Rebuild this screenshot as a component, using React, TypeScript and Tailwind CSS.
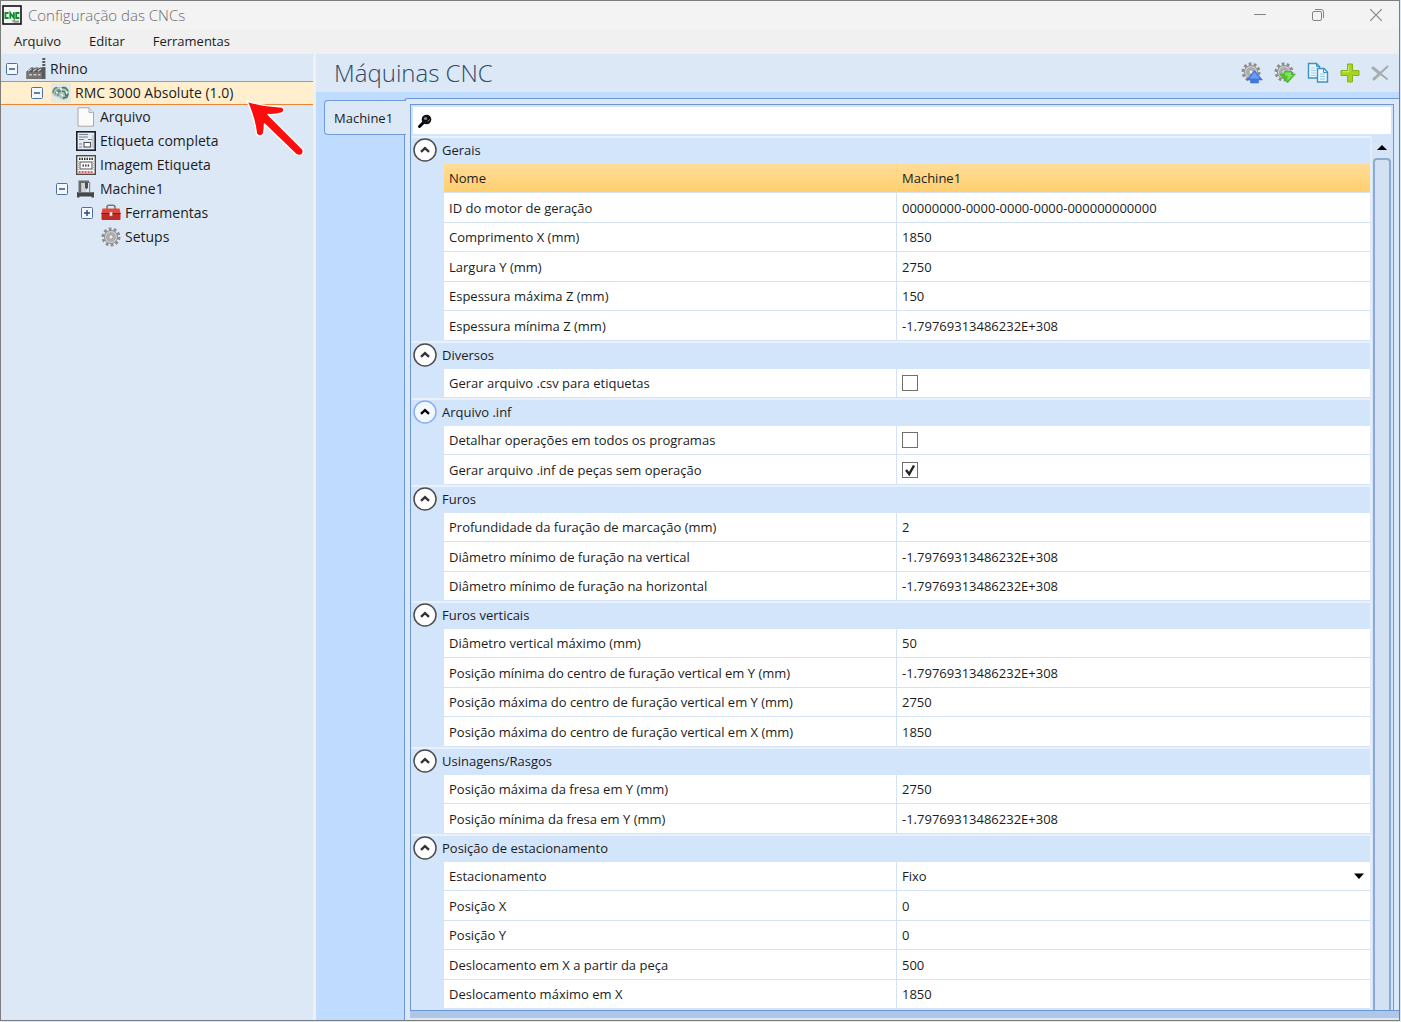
import React, { useState } from "react";

type Field = { label: string; value?: string; checked?: boolean; options?: string[]; selected?: boolean };
type Group = { title: string; hot?: boolean; fields: Field[] };

const MIN = "-1.79769313486232E+308";

const groups: Group[] = [
  {
    title: "Gerais",
    fields: [
      { label: "Nome", value: "Machine1", selected: true },
      { label: "ID do motor de geração", value: "00000000-0000-0000-0000-000000000000" },
      { label: "Comprimento X (mm)", value: "1850" },
      { label: "Largura Y (mm)", value: "2750" },
      { label: "Espessura máxima Z (mm)", value: "150" },
      { label: "Espessura mínima Z (mm)", value: MIN },
    ],
  },
  { title: "Diversos", fields: [{ label: "Gerar arquivo .csv para etiquetas", checked: false }] },
  {
    title: "Arquivo .inf",
    hot: true,
    fields: [
      { label: "Detalhar operações em todos os programas", checked: false },
      { label: "Gerar arquivo .inf de peças sem operação", checked: true },
    ],
  },
  {
    title: "Furos",
    fields: [
      { label: "Profundidade da furação de marcação (mm)", value: "2" },
      { label: "Diâmetro mínimo de furação na vertical", value: MIN },
      { label: "Diâmetro mínimo de furação na horizontal", value: MIN },
    ],
  },
  {
    title: "Furos verticais",
    fields: [
      { label: "Diâmetro vertical máximo (mm)", value: "50" },
      { label: "Posição mínima do centro de furação vertical em Y (mm)", value: MIN },
      { label: "Posição máxima do centro de furação vertical em Y (mm)", value: "2750" },
      { label: "Posição máxima do centro de furação vertical em X (mm)", value: "1850" },
    ],
  },
  {
    title: "Usinagens/Rasgos",
    fields: [
      { label: "Posição máxima da fresa em Y (mm)", value: "2750" },
      { label: "Posição mínima da fresa em Y (mm)", value: MIN },
    ],
  },
  {
    title: "Posição de estacionamento",
    fields: [
      { label: "Estacionamento", options: ["Fixo"] },
      { label: "Posição X", value: "0" },
      { label: "Posição Y", value: "0" },
      { label: "Deslocamento em X a partir da peça", value: "500" },
      { label: "Deslocamento máximo em X", value: "1850" },
    ],
  },
];

function CncLogo() {
  return (
    <svg className="h-5 w-5 shrink-0" viewBox="0 0 20 20" aria-hidden="true">
      <rect x="1" y="1" width="18" height="18" fill="#f6f6f6" stroke="#111" strokeWidth="1.6" />
      <g fill="none" stroke="#0b8f2c" strokeWidth="1.8">
        <path d="M6.6 8H3.4v5h3.2M8.3 13.8V8l3.6 5V7.2M17.4 8h-3.2v5h3.2" />
      </g>
      <path d="M9 15.5h2l1-1 1 1h4v2.2h-5L11 17z" fill="#999" />
    </svg>
  );
}

function FactoryIcon() {
  return (
    <svg className="h-6 w-5" viewBox="0 0 20 24" aria-hidden="true">
      <path d="M.5 14.500L5 10.500h3l-1 1.500 2.500-1.500h3L11.500 12l2.500-1.500h5.500V22H.5z" fill="#5a5a5a" />
      <path d="M.5 15h15.500v7H.5z" fill="#747474" />
      <path d="M2 14.300l3.500-2.600M7 14.300l3.500-2.600M12 14.300l3-2.300" stroke="#cfcfcf" strokeWidth="1.200" />
      <path d="M3 17h3v1.500H3zM7.500 17h3v1.500h-3zM12 17h2.500v1.500H12z" fill="#c8c8c8" />
      <path d="M17.800 1v10" stroke="#5b5b5b" strokeWidth="3" strokeDasharray="2 1" />
    </svg>
  );
}

function MachinePartsIcon() {
  return (
    <svg className="h-5 w-5" viewBox="0 0 20 20" aria-hidden="true">
      <rect width="20" height="20" fill="#e6e9e2" />
      <path d="M1 8l4-4h6l3-1 4 4v5l-2 4-4 1-5-3-4-1-2-3z" fill="#a9c4b8" />
      <path d="M2 10q0-5 4-5.500M4 11q2-4 5-4M7 13q-1-4 3-5" fill="none" stroke="#5f8676" strokeWidth="1.300" />
      <path d="M11 4.500l4 .5 2 3M11 8l3 1 1 4M12 15l4-1 1-4" fill="none" stroke="#3f6f5c" strokeWidth="1.300" />
      <path d="M9 5l2 2M5 9l2 1M10 11l2 2M15 8l1 3" stroke="#eef4f0" strokeWidth="1.400" />
    </svg>
  );
}

function PageIcon() {
  return (
    <svg className="h-5 w-5" viewBox="0 0 20 20" aria-hidden="true">
      <path d="M2 .8h11l4.500 4.700v13.700H2z" fill="#fbfbfb" stroke="#a8a8a8" />
      <path d="M13 .8v4.700h4.500" fill="#e2e2e2" stroke="#b0b0b0" />
    </svg>
  );
}

function LabelIcon() {
  return (
    <svg className="h-5 w-5" viewBox="0 0 20 20" aria-hidden="true">
      <rect x=".8" y=".8" width="18.4" height="18.4" fill="#e4ecf7" stroke="#1c1f26" strokeWidth="1.6" />
      <path d="M3 3.500h9M3 6h9M3 8.500h5M12 8.500h4M3 13h3M3 16h3" stroke="#7b7f86" strokeWidth="1.200" />
      <rect x="8" y="11.500" width="6.500" height="4.500" fill="#fff" stroke="#555" strokeWidth="1.100" />
      <path d="M17 4v13" stroke="#a3a8b0" />
    </svg>
  );
}

function LabelImageIcon() {
  return (
    <svg className="h-5 w-5" viewBox="0 0 20 20" aria-hidden="true">
      <rect x=".7" y=".7" width="18.6" height="18.6" fill="#fafafa" stroke="#4a4a4a" strokeWidth="1.4" />
      <path d="M3 3.800h14" stroke="#333" strokeWidth="2.200" strokeDasharray="1.500 1" />
      <rect x="4" y="7" width="12" height="7" fill="none" stroke="#555" />
      <path d="M6.500 10.500h7.500" stroke="#333" strokeWidth="2" strokeDasharray="1.400 1.200" />
      <path d="M2.600 6v9M17.400 6v9" stroke="#aaa" strokeDasharray="1 1" />
      <path d="M2.600 17h15" stroke="#e02020" strokeWidth="1.400" strokeDasharray="2 1" />
    </svg>
  );
}

function RouterIcon() {
  return (
    <svg className="h-5 w-5" viewBox="0 0 20 20" aria-hidden="true">
      <path d="M2.500 1.500H13V4H5.500v9h-3z" fill="#6a6a6a" />
      <path d="M5.500 4H10v9H5.500z" fill="#cdd3da" />
      <path d="M9 3.500h3v5L10.500 10.500 9 8.500z" fill="#4d4d4d" />
      <path d="M13 3h1.200v10H13z" fill="#8a8a8a" />
      <path d="M1 13h17v5.500h-2.500V17.500h-12v1H1z" fill="#474747" />
      <path d="M1.500 13.500h16" stroke="#777" />
    </svg>
  );
}

function ToolboxIcon() {
  return (
    <svg className="h-5 w-5" viewBox="0 0 20 20" aria-hidden="true">
      <path d="M6 6V4q0-1.800 2-1.800h4q2 0 2 1.800v2" fill="none" stroke="#777" strokeWidth="1.600" />
      <path d="M1.500 5.500h17l1.200 5.500H.3z" fill="#e2483f" />
      <path d="M.5 10.500h19v5.500q0 1-1 1h-17q-1 0-1-1z" fill="#c22a26" />
      <path d="M.5 10.500h19" stroke="#8f1614" />
      <rect x="8.700" y="9" width="2.600" height="4" fill="#eee" stroke="#888" strokeWidth=".6" />
    </svg>
  );
}

function Gear() {
  return (
    <g>
      <circle cx="10" cy="10" r="7.900" fill="none" stroke="#8c8c8c" strokeWidth="3.200" strokeDasharray="2.700 2.264" />
      <circle cx="10" cy="10" r="6.600" fill="#c9c9c9" stroke="#949494" />
      <circle cx="10" cy="10" r="4.300" fill="#b4b4b4" stroke="#a0a0a0" strokeWidth=".8" />
      <circle cx="10" cy="10" r="2.200" fill="#e6edf6" stroke="#8d8d8d" strokeWidth=".8" />
    </g>
  );
}

function GearIcon() {
  return (
    <svg className="h-5 w-5" viewBox="0 0 20 20" aria-hidden="true">
      <Gear />
    </svg>
  );
}

function GearUpIcon() {
  return (
    <svg className="h-[22px] w-[22px]" viewBox="0 0 22 22" aria-hidden="true">
      <Gear />
      <path d="M13.500 8.500L21.500 18h-4v3h-8v-3h-4z" fill="#4377e2" stroke="#3f6fd0" strokeWidth=".6" />
      <path d="M13.500 10l5 6.500h-10z" fill="#6d9af3" />
    </svg>
  );
}

function GearDownIcon() {
  return (
    <svg className="h-[22px] w-[22px]" viewBox="0 0 22 22" aria-hidden="true">
      <Gear />
      <path d="M10 9.500h8V12h3.500L13.500 21 5.500 12H10z" fill="#4fc52c" stroke="#43ad24" strokeWidth=".6" />
      <path d="M11 10.500h6v2.500h2l-5.500 5.500v-5H11z" fill="#83e062" />
    </svg>
  );
}

function CopyIcon() {
  return (
    <svg className="h-[22px] w-[22px]" viewBox="0 0 22 22" aria-hidden="true">
      <path d="M1.500 1.500h8l3 3V16h-11z" fill="#eaf5fc" stroke="#3a93c2" strokeWidth="1.400" />
      <path d="M9.500 1.500v3h3" fill="none" stroke="#3a93c2" />
      <path d="M4 6h4M4 8.500h5M4 11h5M4 13.500h5" stroke="#a5cfe8" />
      <path d="M10.500 6.500H17l3.500 3.500v10h-10z" fill="#eef7fd" stroke="#3a93c2" strokeWidth="1.400" />
      <path d="M16.500 6.500v4h4" fill="none" stroke="#3a93c2" />
      <path d="M13 12h5M13 14.500h5M13 17h5" stroke="#8fc3e3" />
    </svg>
  );
}

function PlusIcon() {
  return (
    <svg className="h-5 w-5" viewBox="0 0 20 20" aria-hidden="true">
      <path d="M7.500 1h5v6.500H19v5h-6.500V19h-5v-6.500H1v-5h6.500z" fill="#a4d421" stroke="#86b31a" />
      <path d="M8.800 2.500v6.300H2.500" fill="none" stroke="#d0ef6d" />
    </svg>
  );
}

function RemoveIcon() {
  return (
    <svg className="h-[18px] w-[18px]" viewBox="0 0 18 18" aria-hidden="true">
      <path d="M2 4L16 15M16.500 2.500L3 15" stroke="#a6a9ae" strokeWidth="2" strokeLinecap="round" />
      <path d="M2 4l6 4.700M3 15l5-4.600" stroke="#a9acb1" strokeWidth="3" strokeLinecap="round" />
    </svg>
  );
}

function PointerArrow() {
  return (
    <svg className="pointer-events-none absolute left-[244px] top-[45px] z-10 h-[58px] w-[62px]" viewBox="0 0 62 58" aria-hidden="true">
      <path
        d="M2 2q14 5 35 6 4 3 0 6-7 2-14 1.500L57.500 50q2 4-1 6-3 1-6-1L19.500 25q0 5-1 10-4 4-7 0Q10 20 2 2z"
        fill="#fb0d0d"
        stroke="#fff"
        strokeWidth="1.400"
        strokeLinejoin="round"
      />
    </svg>
  );
}

type Node = { label: string; pad: string; icon: React.ReactNode; expander?: "minus" | "plus"; selected?: boolean };

const nodes: Node[] = [
  { label: "Rhino", pad: "pl-[5px]", icon: <FactoryIcon />, expander: "minus" },
  { label: "RMC 3000 Absolute (1.0)", pad: "pl-[30px]", icon: <MachinePartsIcon />, expander: "minus", selected: true },
  { label: "Arquivo", pad: "pl-[55px]", icon: <PageIcon /> },
  { label: "Etiqueta completa", pad: "pl-[55px]", icon: <LabelIcon /> },
  { label: "Imagem Etiqueta", pad: "pl-[55px]", icon: <LabelImageIcon /> },
  { label: "Machine1", pad: "pl-[55px]", icon: <RouterIcon />, expander: "minus" },
  { label: "Ferramentas", pad: "pl-[80px]", icon: <ToolboxIcon />, expander: "plus" },
  { label: "Setups", pad: "pl-[80px]", icon: <GearIcon /> },
];

function Expander({ kind }: { kind: "minus" | "plus" }) {
  return (
    <button type="button" aria-label={kind === "minus" ? "Recolher" : "Expandir"} className="block h-3 w-3">
      <svg className="h-3 w-3" viewBox="0 0 12 12" aria-hidden="true">
        <rect x=".5" y=".5" width="11" height="11" rx="1" fill="#f3f8ff" stroke="#4f6f9c" />
        <path d={kind === "minus" ? "M3 6h6" : "M3 6h6M6 3v6"} stroke="#27477c" strokeWidth="1.400" />
      </svg>
    </button>
  );
}

function Tree() {
  return (
    <aside className="relative w-[312px] shrink-0 bg-[#dce8f6] pt-[3px]">
      <ul>
        {nodes.map((n) => (
          <li
            key={n.label}
            className={`flex h-6 items-center ${n.pad} ${
              n.selected ? "border-y border-[#ee8432] bg-[#ffefcf]" : ""
            }`}
          >
            <span className="w-3 shrink-0">{n.expander && <Expander kind={n.expander} />}</span>
            <span className="ml-2 flex w-5 shrink-0 items-center">{n.icon}</span>
            <span className="ml-1 whitespace-nowrap text-[14px] leading-5">{n.label}</span>
          </li>
        ))}
      </ul>
      <PointerArrow />
    </aside>
  );
}

function GroupHeader({ group, open, toggle }: { group: Group; open: boolean; toggle: () => void }) {
  return (
    <tr className="h-7">
      <th colSpan={3} className="border-t-2 border-[#e8f1fc] p-0 text-left align-top font-normal">
        <button type="button" onClick={toggle} aria-expanded={open} className="flex h-6 items-center pl-px">
          <svg className="h-6 w-6" viewBox="0 0 24 24" aria-hidden="true">
            <circle cx="12" cy="12" r="11" fill={group.hot ? "#f3f8ff" : "#fff"} stroke={group.hot ? "#86aef5" : "#4d4d4d"} strokeWidth="1.500" />
            <path d="M8 13.800l4-3.600 4 3.600" fill="none" stroke={group.hot ? "#000" : "#333"} strokeWidth="2.400" />
          </svg>
          <span className="ml-[5px]">{group.title}</span>
        </button>
      </th>
    </tr>
  );
}

function FieldValue({ field, id }: { field: Field; id: string }) {
  if (field.options) {
    return (
      <span className="flex items-center pr-[6px]">
        <select id={id} className="min-w-0 flex-1 appearance-none bg-transparent leading-5 outline-none">
          {field.options.map((o) => (
            <option key={o}>{o}</option>
          ))}
        </select>
        <svg className="h-[6px] w-[10px]" viewBox="0 0 10 6" aria-hidden="true">
          <path d="M0 .5h10L5 6z" fill="#000" />
        </svg>
      </span>
    );
  }
  if (field.checked !== undefined) {
    return (
      <span className="grid h-4 w-4 grid-cols-1">
        <input
          id={id}
          type="checkbox"
          defaultChecked={field.checked}
          className="peer col-start-1 row-start-1 m-0 h-4 w-4 appearance-none border border-[#707070] bg-white"
        />
        <svg className="pointer-events-none invisible col-start-1 row-start-1 h-4 w-4 peer-checked:visible" viewBox="0 0 16 16" aria-hidden="true">
          <path d="M4 8l3.200 4L12 3.500" fill="none" stroke="#222" strokeWidth="2.400" />
        </svg>
      </span>
    );
  }
  return <>{field.value}</>;
}

function GroupBody({ group, index }: { group: Group; index: number }) {
  const [open, setOpen] = useState(true);
  return (
    <>
      <tbody>
        <GroupHeader group={group} open={open} toggle={() => setOpen(!open)} />
      </tbody>
      {open && (
        <tbody>
          {group.fields.map((f, i) => {
            const id = `field-${index}-${i}`;
            const tone = f.selected ? "bg-linear-to-b from-[#ffdd97] to-[#ffcf6e]" : "bg-white";
            return (
              <tr key={f.label} className="odd:h-[29px] even:h-[30px]">
                <td className="p-0" />
                <td className={`border-b border-[#d3e2f6] p-0 pl-[5px] ${tone}`}>
                  {f.value === undefined ? <label htmlFor={id}>{f.label}</label> : f.label}
                </td>
                <td
                  className={`border-b border-l border-[#d3e2f6] p-0 pl-[5px] ${tone} ${
                    f.selected ? "border-l-[#ffd682]" : ""
                  }`}
                >
                  <FieldValue field={f} id={id} />
                </td>
              </tr>
            );
          })}
        </tbody>
      )}
    </>
  );
}

const tools = [
  { label: "Exportar", icon: <GearUpIcon /> },
  { label: "Importar", icon: <GearDownIcon /> },
  { label: "Copiar", icon: <CopyIcon /> },
  { label: "Adicionar", icon: <PlusIcon /> },
  { label: "Remover", icon: <RemoveIcon /> },
];

export default function App() {
  return (
    <div className="flex min-h-screen flex-col bg-[#dce8f6] pb-px pr-px font-['Open_Sans',sans-serif] text-[13px] leading-5 text-[#1c1c1c]">
      <div className="flex flex-1 flex-col border border-[#7d7d7d]">
        <header className="flex h-7 items-center bg-[#f3f3f3] pb-px pl-px">
          <CncLogo />
          <h1 className="ml-[6px] flex-1 text-[15px] font-light text-[#6b6b6b]">Configuração das CNCs</h1>
          <div className="flex items-center gap-[46px] pr-[17px] text-[#858585]">
            <button type="button" aria-label="Minimizar">
              <svg className="h-3 w-3" viewBox="0 0 12 12">
                <path d="M0 5.500h12" stroke="currentColor" />
              </svg>
            </button>
            <button type="button" aria-label="Restaurar">
              <svg className="h-3 w-3" viewBox="0 0 12 12" fill="none" stroke="currentColor">
                <rect x=".5" y="2.500" width="9" height="9" rx="1.500" />
                <path d="M3 .5h6a2.500 2.500 0 0 1 2.500 2.500v6" />
              </svg>
            </button>
            <button type="button" aria-label="Fechar">
              <svg className="h-3 w-3" viewBox="0 0 12 12">
                <path d="M0 0l12 12M12 0L0 12" stroke="currentColor" strokeWidth="1.200" />
              </svg>
            </button>
          </div>
        </header>

        <nav className="flex h-[25px] items-center gap-7 bg-[#f0f0f0] pb-px pl-[13px]">
          <button type="button">Arquivo</button>
          <button type="button">Editar</button>
          <button type="button">Ferramentas</button>
        </nav>

        <div className="flex flex-1">
          <Tree />
          <div className="w-[3px] shrink-0 bg-[#f0f0f0]" />
          <main className="flex min-w-0 flex-1 flex-col bg-[#bfdbff]">
            <div className="flex h-[38px] items-center bg-[#dce8f6] pl-[18px] pr-[10px]">
              <h2 className="flex-1 text-[24px] font-light leading-8 text-[#2f4a69]">Máquinas CNC</h2>
              <div className="flex items-center gap-[11px]">
                {tools.map((t) => (
                  <button key={t.label} type="button" aria-label={t.label}>
                    {t.icon}
                  </button>
                ))}
              </div>
            </div>

            <div className="flex flex-1 pt-[6px]">
              <div role="tablist" className="w-[88px] shrink-0 pl-2 pt-[2px]">
                <button
                  type="button"
                  role="tab"
                  aria-selected="true"
                  className="relative z-10 h-[35px] w-[82px] rounded-l border border-r-0 border-[#6f9bd6] bg-[#dce8f6] pl-[9px] text-left"
                >
                  Machine1
                </button>
              </div>
              <section className="flex min-w-0 flex-1 flex-col rounded-tl border-l border-t border-[#6a96d4] bg-[#dce8f6] pl-[5px] pr-[5px] pt-[5px]">
                <div className="flex flex-1 flex-col border-x border-t border-[#6a96d4] bg-[#d3e5fb] px-px">
                  <label className="mx-px mt-[2px] flex h-[27px] items-center bg-white pl-1">
                    <svg className="h-4 w-4" viewBox="0 0 16 16" aria-hidden="true">
                      <path d="M2.500 13.500L7 9" stroke="#000" strokeWidth="3" strokeLinecap="round" />
                      <circle cx="9.500" cy="6.500" r="4.800" fill="#111" />
                      <circle cx="8.500" cy="5.500" r="1.600" fill="#6c8fc0" />
                      <path d="M11 8.500l1.500-2" stroke="#b98a58" />
                    </svg>
                    <input type="text" aria-label="Pesquisar" className="ml-1 min-w-0 flex-1 bg-transparent outline-none" />
                  </label>
                  <div className="flex flex-1 pt-[2px]">
                    <div className="min-w-0 flex-1">
                      <table className="w-full table-fixed border-separate border-spacing-0">
                        <colgroup>
                          <col className="w-8" />
                          <col className="w-[452px]" />
                          <col />
                        </colgroup>
                        {groups.map((g, i) => (
                          <GroupBody key={g.title} group={g} index={i} />
                        ))}
                      </table>
                    </div>
                    <div className="flex w-[22px] flex-col items-center border-l-2 border-[#e4eefb] bg-[#d5e4f6]">
                      <button type="button" aria-label="Rolar para cima" className="flex h-[22px] w-full items-center justify-center">
                        <svg className="h-[5px] w-[10px]" viewBox="0 0 10 5" aria-hidden="true">
                          <path d="M0 5h10L5 0z" fill="#000" />
                        </svg>
                      </button>
                      <div className="w-[18px] flex-1 rounded-t-sm border-2 border-b-0 border-[#8cabd3] bg-[#d3e2f3]" />
                    </div>
                  </div>
                </div>
                <div className="-mr-[5px] h-2 border-t border-[#6a96d4] bg-[#b0c6e6]" />
                <div className="h-[2px]" />
              </section>
            </div>
          </main>
        </div>
      </div>
    </div>
  );
}
